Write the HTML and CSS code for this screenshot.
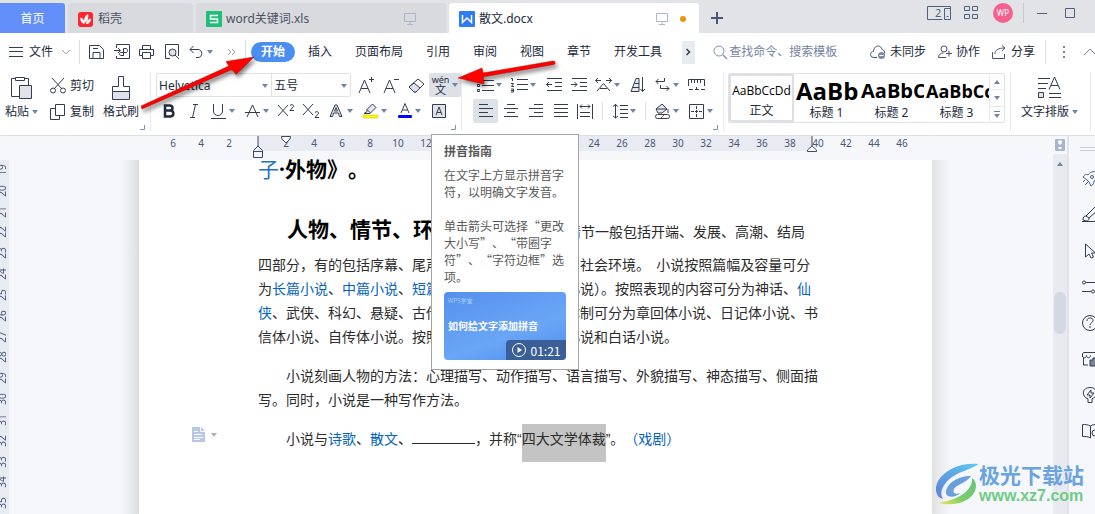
FILE: index.html
```html
<!DOCTYPE html>
<html lang="zh-CN">
<head>
<meta charset="utf-8">
<title>散文.docx</title>
<link rel="stylesheet" href="styles.css">
</head>
<body>
<svg class="defs" aria-hidden="true">
  <symbol id="caret" viewBox="0 0 6 4"><path d="M0 0h6L3 4z" fill="#7284a3"/></symbol>
  <symbol id="screen" viewBox="0 0 12 12"><path d="M.5.5h11v8H.5zM6 8.500v3M3 11.500h6" fill="none" stroke="#aab4cd"/></symbol>
</svg>
<div class="app">
  <header class="tabs">
    <button class="tab home">首页</button>
    <button class="tab docer">
      <svg width="16" height="16" viewBox="0 0 16 16"><rect width="15" height="15" y="1" rx="3" fill="#fb2630"/><path d="M6.500 13C3 12 2 9 2.500 6.500c2.500.5 4 2.500 4 6.500zM6.500 12C5.500 8 7 4.500 10 3c1 3.500 0 7-3.500 9zM8 13c.5-3 2-5 5-5.500 0 3.500-2 5.500-5 5.500z" fill="#fff"/></svg>
      <span>稻壳</span>
    </button>
    <button class="tab sheet">
      <svg width="16" height="16" viewBox="0 0 16 16"><rect width="16" height="16" rx="1" fill="#1fbf7a"/><path d="M12 4.500H4.500v3.500h7v3.500H4" fill="none" stroke="#fff" stroke-width="1.500"/></svg>
      <span>word关键词.xls</span>
      <svg class="state" width="12" height="12"><use href="#screen"/></svg>
    </button>
    <button class="tab active">
      <svg width="16" height="16" viewBox="0 0 16 16"><rect width="16" height="16" rx="1" fill="#2f7bf6"/><path d="M3.500 4v7.500L8 7l4.500 4.500V4" fill="none" stroke="#fff" stroke-width="1.500"/></svg>
      <span>散文.docx</span>
      <svg class="state" width="12" height="12"><use href="#screen"/></svg>
      <i class="dot"></i>
    </button>
    <button class="plus" aria-label="新建"><svg width="12" height="12"><path d="M6 0v12M0 6h12" stroke="#4a5876" stroke-width="2"/></svg></button>
    <div class="window">
      <svg width="24" height="14"><path d="M16 .5H.5v13h15M16 .5h7.500v13h-6v-11h6M19.500 10.500h2" fill="none" stroke="#4f6080"/><text x="8" y="11" class="count">2</text></svg>
      <svg width="14" height="14"><path d="M.5.5h5v4h-5zM8.500.5h5v4h-5zM.5 8.500h5v4h-5zM8.500 8.500h5v4h-5z" fill="none" stroke="#4f6080"/></svg>
      <span class="avatar">WP</span>
      <i class="split"></i>
      <svg class="min" width="10" height="10"><path d="M0 5.500h10" stroke="#4f6080"/></svg>
      <svg class="max" width="10" height="10"><path d="M.5.5h9v9h-9z" fill="none" stroke="#4f6080"/></svg>
    </div>
  </header>

  <nav class="menu">
    <button class="file">
      <svg width="14" height="10"><path d="M0 .5h14M0 4.500h14M0 9.500h14" stroke="#333c50"/></svg>
      <span>文件</span>
      <svg width="10" height="6"><path d="M1 1l4 4 4-4" fill="none" stroke="#9aa0ab"/></svg>
    </button>
    <i class="split"></i>
    <div class="quick">
      <button aria-label="保存"><svg width="16" height="16"><path d="M.5 14.500V1.500h10l4 4v9h-14M4 14V8.500h7V14M4 4.500h5" fill="none" stroke="#333c50"/></svg></button>
      <button aria-label="输出为PDF"><svg width="16" height="16"><path d="M2.500 4V.5h13v14h-13V12M0 6.500h6M4 4l2.500 2.500L4 9M9.500 12V4.500h2.500c2 0 2 4 0 4H7c-2 0-2 3 0 3h2" fill="none" stroke="#333c50"/></svg></button>
      <button aria-label="打印"><svg width="16" height="16"><path d="M3.500 5V1.500h8V5M3 11.500H.5V5.500h14v6H12M3.500 8.500h8v6h-8z" fill="none" stroke="#333c50"/></svg></button>
      <button aria-label="打印预览"><svg width="16" height="16"><path d="M6 14.500H1.500V.5h13V12" fill="none" stroke="#333c50"/><circle cx="8.500" cy="8.500" r="3.500" fill="#dfe2e8" stroke="#333c50"/><path d="M11 11l4 4" stroke="#333c50"/></svg></button>
      <button aria-label="撤销"><svg width="14" height="14"><path d="M4.500 1L1 4.500 4.500 8M1 4.500h8c5 0 5 8 0 8H7" fill="none" stroke="#333c50"/></svg><svg class="ct" width="6" height="4"><use href="#caret"/></svg></button>
      <button class="more" aria-label="更多"><svg width="9" height="8"><path d="M1 1l3 3-3 3M5 1l3 3-3 3" fill="none" stroke="#9aa0ab"/></svg></button>
    </div>
    <i class="split"></i>
    <div class="sections">
      <button class="current">开始</button>
      <button>插入</button>
      <button>页面布局</button>
      <button>引用</button>
      <button>审阅</button>
      <button>视图</button>
      <button>章节</button>
      <button>开发工具</button>
    </div>
    <button class="next" aria-label="后移"><svg width="5" height="8"><path d="M.5 1l3 3-3 3" fill="none" stroke="#333c50" stroke-width="1.500"/></svg></button>
    <label class="search">
      <svg width="15" height="15"><circle cx="6" cy="6" r="5" fill="none" stroke="#8490ab"/><path d="M10 10l4 4" stroke="#8490ab" stroke-width="1.500"/></svg>
      <input type="text" placeholder="查找命令、搜索模板" aria-label="查找命令">
    </label>
    <button class="act">
      <svg width="16" height="15"><path d="M7 12.500H4c-4.500 0-4.500-6-.5-6C4 -.5 11 -.5 12 4.500c2 .5 3 2 2.500 4" fill="none" stroke="#4a5468"/><circle cx="11.500" cy="10.500" r="3.500" fill="#7d8ba8"/><path d="M9.500 10.500h4" stroke="#fff"/></svg>
      <span>未同步</span>
    </button>
    <button class="act">
      <svg width="14" height="14"><circle cx="6" cy="4" r="3" fill="none" stroke="#4a5468"/><path d="M8 12.500H.5c0-3 2-4.500 5-4.500M8 8.500h6M11 5.500v6" fill="none" stroke="#4a5468"/></svg>
      <span>协作</span>
    </button>
    <button class="act">
      <svg width="15" height="14"><path d="M.5 7v6.500h12V9M3 9c0-4 3-6 10-6M10 .5L13 3l-3 3" fill="none" stroke="#4a5468"/></svg>
      <span>分享</span>
    </button>
    <i class="split"></i>
    <button class="dots" aria-label="更多操作"><svg width="3" height="12"><path d="M0 0h2v2H0zM0 5h2v2H0zM0 10h2v2H0z" fill="#7c8290"/></svg></button>
    <button class="fold" aria-label="折叠"><svg width="14" height="8"><path d="M1 7l6-6 6 6" fill="none" stroke="#7c8290"/></svg></button>
  </nav>

  <section class="ribbon">
    <div class="group clip">
      <button class="tall paste">
        <svg width="22" height="24"><path d="M4 2.500H.5v18H8M14 2.500h3.500V9" fill="none" stroke="#333c50"/><path d="M4.500 1.500h9v3h-9z" fill="none" stroke="#333c50"/><path d="M8.500 9.500h12v13h-12z" fill="#dfe2e8" stroke="#333c50"/></svg>
        <span>粘贴<svg width="6" height="4"><use href="#caret"/></svg></span>
      </button>
      <div class="stack">
        <button><svg width="16" height="16"><path d="M2 0l10 11M14 0L4 11" stroke="#333c50"/><circle cx="3" cy="12.500" r="2.500" fill="none" stroke="#333c50"/><circle cx="13" cy="12.500" r="2.500" fill="none" stroke="#333c50"/></svg><span>剪切</span></button>
        <button><svg width="16" height="16"><path d="M5.500.5h9v11h-9zM5 4.500H.5v11h9V12" fill="none" stroke="#333c50"/></svg><span>复制</span></button>
      </div>
      <button class="tall brush">
        <svg width="20" height="24"><path d="M7.500.5h5v10h6v5h-17v-5h6z" fill="#fff" stroke="#333c50"/><path d="M1.500 15.500h17v8h-17z" fill="#dfe2e8" stroke="#333c50"/></svg>
        <span>格式刷</span>
      </button>
      <svg class="corner" width="5" height="5"><path d="M4.500 0v4.500H0" fill="none" stroke="#7d92b8"/></svg>
    </div>

    <div class="group font">
      <div class="row">
        <div class="combo">
          <label class="box face"><input type="text" value="Helvetica" aria-label="字体"><svg width="6" height="4"><use href="#caret"/></svg></label>
          <label class="box size"><input type="text" value="五号" aria-label="字号"><svg width="6" height="4"><use href="#caret"/></svg></label>
        </div>
        <button aria-label="增大字号"><svg width="17" height="17"><path d="M1 16L6.500 3 12 16M3 11.500h7M13.500 0v5M11 2.500h5" fill="none" stroke="#333c50"/></svg></button>
        <button aria-label="减小字号"><svg width="17" height="17"><path d="M1 16L6.500 3 12 16M3 11.500h7M11 2.500h5" fill="none" stroke="#333c50"/></svg></button>
        <button aria-label="清除格式"><svg width="17" height="15"><path d="M1 9l9-8 6 5-8 8H6z" fill="#fff" stroke="#333c50"/><path d="M1 9l5-4 6 5-4 4H6z" fill="#dfe2e8" stroke="#333c50"/></svg></button>
        <button class="pinyin" aria-label="拼音指南"><span class="wen"><small>wén</small><b>文</b></span><svg width="6" height="4"><use href="#caret"/></svg></button>
      </div>
      <div class="row">
        <button aria-label="加粗"><svg width="12" height="14"><path d="M2 1.500h4.500c4 0 4 5 0 5H2zM2 6.500h5c4.500 0 4.500 6 0 6H2z" fill="none" stroke="#222b40" stroke-width="2.500"/></svg></button>
        <button aria-label="倾斜"><svg width="10" height="14"><path d="M4 .5h5M1 13.500h5M6.500.5l-3 13" fill="none" stroke="#333c50"/></svg></button>
        <button aria-label="下划线"><svg width="15" height="15"><path d="M2.500 0v7c0 6 9 6 9 0V0M0 14.500h15" fill="none" stroke="#333c50"/></svg></button>
        <svg class="ct" width="6" height="4"><use href="#caret"/></svg>
        <button aria-label="删除线"><svg width="16" height="14"><path d="M2 13L7.500 1 13 13M0 8.500h15" fill="none" stroke="#333c50"/></svg></button>
        <svg class="ct" width="6" height="4"><use href="#caret"/></svg>
        <button aria-label="上标"><svg width="17" height="14"><path d="M0 1l10 11M10 1L0 12M12 1.500c1-1.500 4-1 3.500 1L12 6.500h4" fill="none" stroke="#333c50"/></svg></button>
        <button aria-label="下标"><svg width="17" height="14"><path d="M0 0l10 11M10 0L0 11M12 8.500c1-1.500 4-1 3.500 1L12 13.500h4" fill="none" stroke="#333c50"/></svg></button>
        <button aria-label="文字效果"><svg width="15" height="14"><path d="M1 12.500L6 1h2l5 11.500h-2.500L9.500 9h-5L3.500 12.500zM5.500 7h3L7 3.500z" fill="#e4e7ee" stroke="#333c50"/></svg></button>
        <svg class="ct" width="6" height="4"><use href="#caret"/></svg>
        <button aria-label="突出显示"><svg width="17" height="16"><path d="M2 10.500h6l6-6L10.500 1 5 6.500v2zM5 6.500L8.500 10" fill="#e4e7ee" stroke="#333c50"/><rect x="1" y="12" width="15" height="3" rx="1" fill="#ff0" stroke="#b0b000" stroke-width=".5"/></svg></button>
        <svg class="ct" width="6" height="4"><use href="#caret"/></svg>
        <button aria-label="字体颜色"><svg width="14" height="16"><path d="M3 10L7 .5 11 10M4.500 7h5" fill="none" stroke="#333c50"/><rect y="12" width="14" height="3" rx="1" fill="#00f"/></svg></button>
        <svg class="ct" width="6" height="4"><use href="#caret"/></svg>
        <button aria-label="字符底纹"><svg width="14" height="14"><path d="M.5.5h13v13H.5z" fill="#dfe2e8" stroke="#333c50"/><path d="M4 11l3-8 3 8M5 8.500h4" fill="none" stroke="#333c50"/></svg></button>
      </div>
      <svg class="corner" width="5" height="5"><path d="M4.500 0v4.500H0" fill="none" stroke="#7d92b8"/></svg>
    </div>

    <div class="group para">
      <div class="row">
        <button aria-label="项目符号"><svg width="17" height="15"><path d="M5 2.500h12M5 7.500h12M5 12.500h12" stroke="#333c50"/><path d="M.5 1.500h2v2h-2zM.5 6.500h2v2h-2zM.5 11.500h2v2h-2z" fill="none" stroke="#333c50"/></svg></button>
        <svg class="ct" width="6" height="4"><use href="#caret"/></svg>
        <button aria-label="编号"><svg width="17" height="16"><path d="M6 2.500h11M6 7.500h11M6 12.500h11M0 1.500h1.500V4M0 6.500h2.500L.5 9.500h2.500M0 12h2.500v3H0M0 13.500h2" fill="none" stroke="#333c50"/></svg></button>
        <svg class="ct" width="6" height="4"><use href="#caret"/></svg>
        <button aria-label="减少缩进"><svg width="16" height="14"><path d="M1 .5h15M9 4.500h7M9 8.500h7M1 12.500h15M0 6.500h6M3 4L.5 6.500 3 9" fill="none" stroke="#333c50"/></svg></button>
        <button aria-label="增加缩进"><svg width="16" height="14"><path d="M1 .5h15M9 4.500h7M9 8.500h7M1 12.500h15M0 6.500h6M3.500 4L6 6.500 3.500 9" fill="none" stroke="#333c50"/></svg></button>
        <button aria-label="中文版式"><svg width="17" height="14"><path d="M2 13l6.500-7.500L15 13M5 10.500h7M3 0L.5 2.500 3 5M.5 2.500H6M14 0l2.500 2.500L14 5M16.500 2.500H11" fill="none" stroke="#333c50"/></svg></button>
        <svg class="ct" width="6" height="4"><use href="#caret"/></svg>
        <button aria-label="排序"><svg width="16" height="16"><path d="M1 14.500L6 1.500h3v13zM3 10.500h6M4.500 6.500H9" fill="#e4e7ee" stroke="#333c50"/><path d="M12.500 0v14M10.500 12l2 2.500 2.500-2.500" fill="none" stroke="#333c50"/></svg></button>
        <button aria-label="换行"><svg width="15" height="14"><path d="M3.500 1L1 3.500 3.500 6M1 3.500h8.500V0M5.500 7v3.500H14M11.500 8l2.500 2.500-2.500 2.500" fill="none" stroke="#333c50"/></svg></button>
        <svg class="ct" width="6" height="4"><use href="#caret"/></svg>
        <button aria-label="制表位"><svg width="17" height="12"><path d="M.5 7V.5h16V7M3.500 1v3M6.500 1v3M9.500 1v3M12.500 1v3M1 10.500h4M7 10.500h4M13 10.500h4M8.500 8v3" fill="none" stroke="#333c50"/></svg></button>
      </div>
      <div class="row">
        <button class="on" aria-label="左对齐"><svg width="14" height="14"><path d="M0 .5h9M0 4.500h14M0 8.500h9M0 12.500h14" stroke="#333c50"/></svg></button>
        <button aria-label="居中对齐"><svg width="14" height="14"><path d="M3 .5h8M0 4.500h14M3 8.500h8M0 12.500h14" stroke="#333c50"/></svg></button>
        <button aria-label="右对齐"><svg width="14" height="14"><path d="M5 .5h9M0 4.500h14M5 8.500h9M0 12.500h14" stroke="#333c50"/></svg></button>
        <button aria-label="两端对齐"><svg width="14" height="14"><path d="M0 .5h14M0 4.500h14M0 8.500h14M0 12.500h14" stroke="#333c50"/></svg></button>
        <button aria-label="分散对齐"><svg width="17" height="15"><path d="M.5 0v15M15.500 0v15M3 2.500h10M5 .5l-2 2 2 2M11 .5l2 2-2 2M3 8.500h10M3 12.500h10" fill="none" stroke="#333c50"/></svg></button>
        <i class="bar"></i>
        <button aria-label="行距"><svg width="16" height="15"><path d="M3.500 0v14M1 2.500L3.500.5 6 2.500M1 12l2.500 2L6 12M8 1.500h8M8 5.500h8M8 9.500h8M8 13.500h8" fill="none" stroke="#333c50"/></svg></button>
        <svg class="ct" width="6" height="4"><use href="#caret"/></svg>
        <i class="bar"></i>
        <button aria-label="底纹"><svg width="17" height="16"><path d="M2 6l6-5 5 5-5 4H4zM2 6h11" fill="#e4e7ee" stroke="#333c50"/><path d="M14 6v4" stroke="#333c50"/><rect x="1.500" y="11.500" width="14" height="4" rx="2" fill="#fff" stroke="#333c50"/><path d="M7 15l3-3" stroke="#e03030"/></svg></button>
        <svg class="ct" width="6" height="4"><use href="#caret"/></svg>
        <button aria-label="边框"><svg width="15" height="15"><path d="M.5.500h14v14H.5z" fill="none" stroke="#333c50"/><path d="M7.500 2v11M2 7.500h11" stroke="#333c50" stroke-dasharray="3 1"/></svg></button>
        <svg class="ct" width="6" height="4"><use href="#caret"/></svg>
      </div>
      <svg class="corner" width="5" height="5"><path d="M4.500 0v4.500H0" fill="none" stroke="#7d92b8"/></svg>
    </div>

    <div class="group styles">
      <div class="gallery">
        <button class="style chosen"><span class="s0">AaBbCcDd</span><em>正文</em></button>
        <button class="style"><span class="s1">AaBb</span><em>标题 1</em></button>
        <button class="style"><span class="s2">AaBbC</span><em>标题 2</em></button>
        <button class="style"><span class="s3">AaBbCc</span><em>标题 3</em></button>
        <div class="steps">
          <button aria-label="上一行"><svg class="flip" width="6" height="4"><use href="#caret"/></svg></button>
          <button aria-label="下一行"><svg width="6" height="4"><use href="#caret"/></svg></button>
          <button aria-label="展开"><svg width="6" height="7"><path d="M0 .5h6" stroke="#7284a3"/><path d="M0 3h6L3 7z" fill="#7284a3"/></svg></button>
        </div>
      </div>
    </div>

    <div class="group layout">
      <button class="tall">
        <svg width="23" height="24"><path d="M0 2.500h12M0 7.500h10M0 12.500h8M11 21.500h12M11 17.500h12M11 13.500L16.500 1 22 13.500M13 9.500h7" fill="none" stroke="#333c50"/><path d="M.5 16.500h5v5h-5z" fill="#dfe2e8" stroke="#333c50"/></svg>
        <span>文字排版<svg width="6" height="4"><use href="#caret"/></svg></span>
      </button>
    </div>
  </section>

  <div class="body">
    <div class="work">
      <div class="ruler">
        <div class="outer"><span>6</span><span>4</span><span>2</span></div>
        <div class="inner"><span>2</span><span>4</span><span>6</span><span>8</span><span>10</span><span>12</span><span>14</span><span>16</span><span>18</span><span>20</span><span>22</span><span>24</span><span>26</span><span>28</span><span>30</span><span>32</span><span>34</span><span>36</span><span>38</span><span class="last">40</span>
          <svg class="mark hang" width="10" height="22"><path d="M5 0v10M.5 21.500v-7L5 10l4.500 4.500v7zM.5 15.500h9" fill="none" stroke="#3d4a66"/></svg>
          <svg class="mark first" width="10" height="8"><path d="M.5.500h9L9 3 5 7 1 3z" fill="#fff" stroke="#3d4a66"/></svg>
          <svg class="mark right" width="10" height="17"><path d="M5 0v10" stroke="#3d4a66"/><path d="M.5 15.500v-1.500L5 10l4.500 4v1.500z" fill="#fff" stroke="#3d4a66"/></svg>
        </div>
        <div class="rest"><span>42</span><span>44</span><span>46</span></div>
      </div>
      <div class="canvas">
        <div class="vruler"><span>19</span><span>20</span><span>21</span><span>22</span><span>23</span><span>24</span><span>25</span><span>26</span><span>27</span><span>28</span><span>29</span><span>30</span><span>31</span><span>32</span><span>33</span><span>34</span><span>35</span></div>
        <main class="page">
          <h2><a href="#zi">子</a>·外物》。</h2>
          <p class="lead"><b>人物、情节、环境</b>是小说的三要素。情节一般包括开端、发展、高潮、结局</p>
          <p>四部分，有的包括序幕、尾声。环境包括自然环境和社会环境。&nbsp; 小说按照篇幅及容量可分<br>为<a href="#a">长篇小说</a>、<a href="#b">中篇小说</a>、<a href="#c">短篇小说</a>和微型小说（小小说）。按照表现的内容可分为神话、<a href="#d">仙</a><br><a href="#d">侠</a>、武侠、科幻、悬疑、古传、当代、历史。按照体制可分为章回体小说、日记体小说、书<br>信体小说、自传体小说。按照语言形式可分为文言小说和白话小说。</p>
          <p class="indent">小说刻画人物的方法：心理描写、动作描写、语言描写、外貌描写、神态描写、侧面描<br>写。同时，小说是一种写作方法。</p>
          <p class="indent full">小说与<a href="#e">诗歌</a>、<a href="#f">散文</a>、<span class="blank"></span>，并称<q>“</q><mark>四大文学体裁</mark><q>”</q>。<a href="#g">（戏剧）</a></p>
          <div class="smart">
            <svg width="13" height="15"><path d="M0 0h9l4 4v11H0z" fill="#b5c8e8"/><path d="M8.500 0v4.500H13M2 4.500h4M2 7.500h8M2 10.500h9M2 12.500h6" fill="none" stroke="#fff"/></svg>
            <svg width="6" height="4"><path d="M0 0h6L3 4z" fill="#b0b0b0"/></svg>
          </div>
        </main>
      </div>
    </div>
    <div class="scroll">
      <svg width="10" height="12"><rect width="10" height="12" rx="1" fill="#a9b5cf"/><path d="M3 1.500h4V4L5 6 3 4zM1.500 8h2v2h3V8h2" fill="#fff"/></svg>
      <div class="track"><svg class="flip" width="6" height="4"><use href="#caret"/></svg><i class="thumb"></i></div>
    </div>
    <aside class="side">
      <i class="grip"></i>
      <svg width="16" height="16"><path d="M1 6c2-3 4-3 5-2 2-3 5-4 9-3 1 4 0 7-3 9 0 2-1 4-3 5L7 11 5 9zM1 11l2-2M3 14l3-3" fill="none" stroke="#4f6080"/><circle cx="10" cy="6" r="1.500" fill="none" stroke="#4f6080"/></svg>
      <svg width="16" height="16"><path d="M0 14.500h16M1 13c0-3 1-4 3-4l9-9 3 3-9 8c0 2-1 3-3 3zM4 9l3 2" fill="none" stroke="#333c50"/></svg>
      <svg width="16" height="16"><path d="M3.500 1v13l3.500-3 2 4 2.500-1-2-4h4z" fill="none" stroke="#333c50"/></svg>
      <svg width="16" height="16"><path d="M4 3.500h12M0 12.500h9" stroke="#333c50"/><circle cx="2" cy="3.500" r="1.500" fill="none" stroke="#333c50"/><circle cx="11" cy="12.500" r="1.500" fill="none" stroke="#333c50"/></svg>
      <svg width="16" height="16"><circle cx="8" cy="8" r="7.500" fill="none" stroke="#333c50"/><path d="M5 6c0-4 6-4 6-.5C11 7.500 8 8 8 10M8 11v2" fill="none" stroke="#333c50"/></svg>
      <svg width="16" height="16"><path d="M1.500 7v7H6M.5 6V3l1-1.500h14M.5 4.500c0 3 4 3 4 0 0 3 4 3 4 0" fill="none" stroke="#333c50"/><path d="M8 15V9h3V7h3v8z" fill="#7d8494" stroke="#333c50"/></svg>
      <svg width="16" height="16"><path d="M6 12C-1 9 0 .5 8 .5s9 8.500 2 11.500v3.500H6zM9 3L5 8h3v3l4-5H9z" fill="none" stroke="#333c50"/></svg>
      <svg width="16" height="16"><path d="M8.500 3C6 1.500 3 1.500.5 1.500v12c3 0 6 0 8 1.500zM8.500 3c2-1.500 5-1.500 7.500-1.500" fill="none" stroke="#333c50"/><circle cx="13" cy="10" r="3" fill="none" stroke="#333c50"/></svg>
    </aside>
  </div>

  <div class="tip" role="tooltip">
    <h3>拼音指南</h3>
    <p>在文字上方显示拼音字<br>符，以明确文字发音。</p>
    <p>单击箭头可选择“更改<br>大小写”、“带圈字<br>符”、“字符边框”选<br>项。</p>
    <div class="video">
      <small>WPS学堂</small>
      <strong>如何给文字添加拼音</strong>
      <span class="time"><svg width="14" height="14"><circle cx="7" cy="7" r="6.500" fill="none" stroke="#fff"/><path d="M5.500 4v6L10 7z" fill="#fff"/></svg>01:21</span>
    </div>
  </div>

  <svg class="arrows" width="560" height="120" aria-hidden="true">
    <g fill="#f00" stroke="#a01010" stroke-width=".5"><path d="M141 106l88-40-3-4.500L254 57l-18 17.500-4-5L142 109z"/><path d="M553 61L483 73l-1-5-24 10 26 6-1-7 71-12.500c2-1 1-4-1-3.500z"/></g>
  </svg>

  <div class="brand">
    <svg width="43" height="42" viewBox="0 0 43 42"><defs><linearGradient id="g1" x1="0" y1="1" x2="1" y2="0"><stop stop-color="#5f80d6"/><stop offset="1" stop-color="#5ccaf2"/></linearGradient><linearGradient id="g2" x1="0" y1="1" x2="1" y2="0"><stop stop-color="#f2e84a"/><stop offset=".4" stop-color="#7fcc6c"/><stop offset="1" stop-color="#5fc67e"/></linearGradient></defs><path d="M43 1C30 0 17 3 8 11 1 17-2 25 1 31c1 3 3 4 6 5C2 29 8 17 23 10c7-3 13-5 20-9z" fill="url(#g1)"/><path d="M3 40c14 4 35-1 37-16 0-4-1-7-4-9 1 10-9 21-33 25z" fill="url(#g2)"/><path d="M35 13c-13 0-24 7-25 16-1 6 10 6 14 1-4 2-8 0-6-4 3-5 11-5 17-13z" fill="#6a9fdc"/></svg>
    <div><strong>极光下载站</strong><span>www.xz7.com</span></div>
  </div>
</div>
</body>
</html>
```
FILE: styles.css
```css
* { box-sizing: border-box; }
body {
  margin: 0;
  font: 12px/18px "Noto Sans", "Noto Sans CJK SC", sans-serif;
  color: #222a3c;
  background: #f5f7fa;
}
button { border: 0; padding: 0; background: none; font: inherit; color: inherit; display: flex; align-items: center; justify-content: center; }
input { border: 0; padding: 0; margin: 0; background: none; font: inherit; color: inherit; min-width: 0; outline: 0; }
svg { display: block; flex: none; }
a { color: #0563c1; text-decoration: none; }
.defs { position: absolute; width: 0; height: 0; }
.app { position: relative; height: 100vh; display: flex; flex-direction: column; overflow: hidden; }
.flip { transform: rotate(180deg); }
.split { flex: none; width: 1px; height: 24px; background: #d9dce2; }

/* Tab strip */
.tabs { flex: none; height: 33px; padding-top: 3px; display: flex; gap: 3px; background: #e2e3e7; color: #4a5264; }
.tab { height: 30px; border-radius: 3px 3px 0 0; background: #d8dade; justify-content: flex-start; gap: 4px; padding: 2px 10px 0; }
.tab.home { width: 65px; background: #638ffb; color: #fff; justify-content: center; border-radius: 0 3px 0 0; }
.tab.docer { width: 125px; }
.tab.sheet { width: 250px; }
.tab.active { width: 250px; background: #fff; color: #222a3c; }
.state { margin-left: auto; margin-right: 20px; }
.active .state { margin-right: 8px; }
.dot { width: 6px; height: 6px; border-radius: 50%; background: #e8960c; margin-right: 3px; }
.plus { width: 30px; height: 30px; }
.window { margin-left: auto; height: 20px; display: flex; align-items: center; }
.window > svg + svg { margin-left: 13px; }
.count { font-size: 11px; fill: #4f6080; }
.avatar { width: 20px; height: 20px; margin-left: 15px; border-radius: 50%; background: #f5608f; color: #fff; font-size: 8px; line-height: 20px; text-align: center; }
.window .split { height: 20px; margin: 0 13px 0 10px; background: #c4c8d0; }
.window .max { margin: 0 20px 0 18px; }

/* Menu row */
.menu { flex: none; height: 35px; padding: 3px 0 0 9px; display: flex; align-items: center; background: #fff; overflow: hidden; }
.file { gap: 6px; margin-right: 8px; }
.file span { margin-right: 2px; }
.quick { display: flex; align-items: center; gap: 9px; padding: 0 9px; }
.quick .ct { margin-left: 4px; }
.quick .more { margin-left: 5px; }
.sections { display: flex; align-items: center; gap: 23px; margin-left: 5px; white-space: nowrap; }
.sections .current { width: 44px; height: 20px; margin-right: -10px; border-radius: 10px; background: #4a8ef2; color: #fff; font-weight: bold; }
.next { width: 13px; height: 23px; margin-left: 20px; background: #e8ebf0; }
.search { flex: 1; display: flex; align-items: center; gap: 1px; margin-left: 18px; min-width: 0; }
.search input { flex: 1; }
.search input::placeholder { color: #7684a2; opacity: 1; }
.act { gap: 4px; margin-right: 10px; white-space: nowrap; }
.act + .act { margin-left: 2px; }
.menu .dots { margin: 0 17px; }
.menu .fold { width: 12px; justify-content: flex-start; }

/* Ribbon */
.ribbon { flex: none; height: 67px; display: flex; background: #fff; padding: 4px 0; }
.group { position: relative; display: flex; flex: none; border-right: 1px solid #e8eaee; }
.corner { position: absolute; right: 5px; bottom: 1px; }
.tall { flex-direction: column; gap: 3px; padding-top: 4px; justify-content: flex-start; }
.tall span { display: flex; align-items: center; gap: 3px; white-space: nowrap; }
.clip { width: 151px; padding-left: 5px; }
.stack { margin-left: 12px; display: flex; flex-direction: column; }
.stack button { height: 26px; gap: 4px; padding-top: 1px; }
.brush { margin-left: 9px; }
.font { width: 311px; padding-left: 5px; flex-direction: column; }
.para { width: 262px; padding-left: 11px; flex-direction: column; }
.row { display: flex; align-items: center; height: 26px; }
.row button { width: 25px; height: 24px; border-radius: 2px; }
.row .ct { margin: 0 5px 0 -2px; }
.row .on { background: #dde2e8; }
.bar { width: 1px; height: 18px; background: #dcdfe5; margin: 0 4px; }
.combo { display: flex; width: 195px; height: 24px; margin-right: 3px; border: 1px solid #dfe2e6; border-radius: 2px; }
.box { display: flex; align-items: center; padding: 2px 3px 0 2px; min-width: 0; }
.box input { flex: 1; }
.face { flex: 3; }
.size { flex: 2; border-left: 1px solid #dfe2e6; }
.row .pinyin { width: 32px; gap: 3px; background: #dde1e7; }
.wen { display: flex; flex-direction: column; align-items: center; line-height: 10px; }
.wen small { font-size: 9px; line-height: 8px; }
.wen b { font-size: 11px; font-weight: normal; line-height: 11px; }
.styles { width: 287px; padding: 1px 5px 0 4px; }
.gallery { display: flex; width: 278px; height: 50px; border: 1px solid #dfe2e6; border-radius: 2px; }
.style { width: 65px; flex-direction: column; overflow: hidden; color: #000; }
.style span { height: 30px; line-height: 34px; width: 100%; padding-left: 2px; text-align: left; white-space: nowrap; overflow: hidden; font-family: "Open Sans", sans-serif; }
.style em { font-style: normal; height: 18px; line-height: 18px; color: #222a3c; }
.style.chosen { border: 2px solid #dddfe5; }
.style .s0 { font-size: 12px; padding: 0; height: 28px; line-height: 30px; text-align: center; }
.style .s1 { font-size: 24px; font-weight: bold; }
.style .s2 { font-size: 20px; font-weight: bold; }
.style .s3 { font-size: 18px; font-weight: bold; }
.steps { flex: 1; display: flex; flex-direction: column; border-left: 1px solid #e8eaee; }
.steps button { flex: 1; }
.steps button + button { border-top: 1px solid #e8eaee; }
.layout { width: 80px; padding-left: 10px; }

/* Work area */
.body { flex: 1; min-height: 0; display: flex; border-top: 1px solid #dcdfe4; }
.work { flex: 1; min-width: 0; display: flex; flex-direction: column; }
.ruler { flex: none; height: 24px; display: flex; font-size: 10px; line-height: 15px; color: #4a5876; }
.ruler span { flex: none; width: 28px; text-align: center; }
.outer { width: 258px; display: flex; justify-content: flex-end; padding-right: 15px; }
.inner { position: relative; width: 554px; height: 15px; display: flex; padding-left: 14px; background: #e8ebf1; }
.rest { display: flex; padding-left: 20px; }
.mark { position: absolute; top: 0; }
.hang { left: -5px; }
.first { left: 23px; }
.right { right: -5px; }
.canvas { flex: 1; min-height: 0; display: flex; }
.vruler { width: 9px; background: #e8ebf1; display: flex; flex-direction: column; overflow: hidden; font-size: 10px; line-height: 12px; color: #4a5876; }
.vruler span { flex: 1; width: 12px; margin-left: -4px; writing-mode: vertical-rl; transform: rotate(180deg); text-align: center; }
.page { position: relative; flex: 1; min-width: 0; margin: 0 121px 0 130px; padding-left: 119px; background: #fff; color: #2c2c2c; font: 14px/24px "Noto Sans CJK SC", sans-serif; white-space: nowrap; }
.page::before, .page::after { content: ""; position: absolute; top: 0; bottom: 0; width: 18px; }
.page::before { right: 100%; background: linear-gradient(to left, #dcdee0, #f5f7fa); }
.page::after { left: 100%; background: linear-gradient(to right, #dfe1e3, #f5f7fa); }
.page h2 { margin: 0; font: bold 21px/18px "Noto Sans", "Noto Sans CJK SC", sans-serif; color: #000; text-spacing-trim: space-all; }
.page h2 a { font-weight: normal; color: #2272c8; }
.page p { margin: 15px 0 0; }
.page .lead { margin: 38px 0 9px; padding-left: 29px; }
.lead b { font-size: 21px; color: #000; }
.page .lead + p { margin-top: 9px; }
.page .indent { text-indent: 28px; }
.page .full { text-spacing-trim: space-all; }
.blank { display: inline-block; width: 63px; border-bottom: 1px solid #2c2c2c; }
.page q { quotes: none; font-family: "Liberation Sans", sans-serif; }
.page q::before, .page q::after { content: none; }
.page mark { background: #c4c4c4; color: inherit; padding: 4px 0 14px; }
.smart { position: absolute; left: 53px; top: 267px; display: flex; align-items: center; gap: 6px; }
.scroll { width: 16px; border-right: 2px solid #e2e3ea; display: flex; flex-direction: column; align-items: center; padding-top: 3px; }
.track { flex: 1; align-self: stretch; margin-top: 3px; padding-top: 8px; background: #e9eaf0; display: flex; flex-direction: column; align-items: center; }
.thumb { width: 12px; height: 42px; margin-top: 126px; border-radius: 6px; background: #d4d8e2; }
.side { width: 26px; padding: 11px 0 0 13px; display: flex; flex-direction: column; gap: 20px; overflow: hidden; }
.grip { flex: none; height: 4px; margin-left: -2px; border: 1px solid #c8cbd0; border-width: 1px 0; }

/* Tooltip */
.tip { position: absolute; left: 431px; top: 134px; width: 148px; padding: 7px 12px 9px; background: #fff; border: 1px solid #a4a4a4; font: 12px/17px "Noto Sans CJK SC", sans-serif; color: #595959; white-space: nowrap; text-spacing-trim: space-all; }
.tip h3 { margin: 0 0 7px; font-size: 12px; }
.tip p { margin: 0 0 17px; }
.tip p + p { margin-bottom: 7px; }
.video { position: relative; height: 68px; border-radius: 4px; overflow: hidden; padding: 2px 4px; color: #fff; background: linear-gradient(160deg, #5590ee, #6aa6f6 60%, #4b8df0); }
.video small { display: block; font-size: 6px; line-height: 13px; color: #a9cbfb; }
.video strong { display: block; font-size: 10px; line-height: 14px; margin-top: 12px; }
.time { position: absolute; right: 0; bottom: 0; width: 60px; height: 20px; display: flex; align-items: center; justify-content: center; gap: 5px; border-radius: 4px 0 0 0; background: #3a5f98; }

.arrows { position: absolute; left: 0; top: 0; pointer-events: none; filter: drop-shadow(2px 3px 2px rgba(0, 0, 0, .5)); }

/* Site mark */
.brand { position: absolute; right: 11px; bottom: 8px; display: flex; align-items: center; white-space: nowrap; }
.brand div { display: flex; flex-direction: column; }
.brand strong { font: bold 21px/24px "Noto Sans CJK SC", sans-serif; color: #6aa3e0; }
.brand span { font: bold 16px/20px "Liberation Sans", sans-serif; color: #6fcb86; }
```
